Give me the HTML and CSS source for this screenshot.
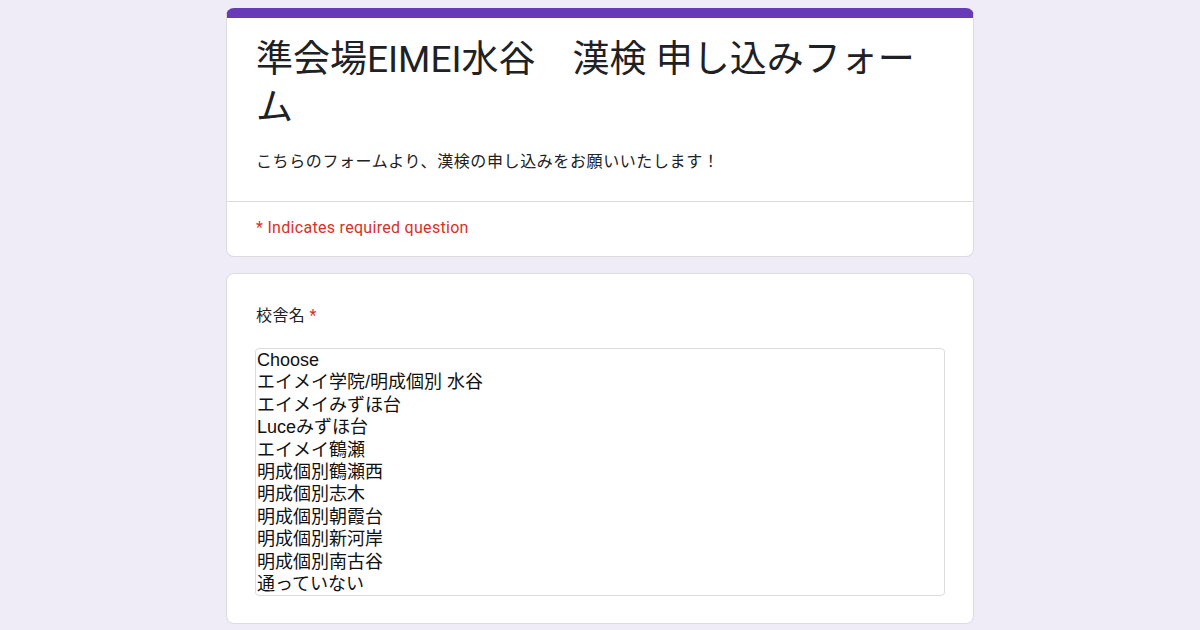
FILE: index.html
```
<!DOCTYPE html>
<html lang="ja">
<head>
    <meta charset="UTF-8">
    <meta name="viewport" content="width=device-width, initial-scale=1.0">
    <title>準会場EIMEI水谷　漢検 申し込みフォーム</title>
    <link rel="stylesheet" href="styles.css">
</head>
<body>
    <div class="form">
        <div class="card header-card">
            <div class="header-main">
                <h1 class="form-title">準会場EIMEI水谷　漢検 申し込みフォーム</h1>
                <p class="form-desc">こちらのフォームより、漢検の申し込みをお願いいたします！</p>
            </div>
            <div class="header-note">* Indicates required question</div>
        </div>

        <div class="card question">
            <div class="q-label">校舎名 <span class="req">*</span></div>
            <div class="listbox">
                <div class="opt">Choose</div>
                <div class="opt">エイメイ学院/明成個別 水谷</div>
                <div class="opt">エイメイみずほ台</div>
                <div class="opt">Luceみずほ台</div>
                <div class="opt">エイメイ鶴瀬</div>
                <div class="opt">明成個別鶴瀬西</div>
                <div class="opt">明成個別志木</div>
                <div class="opt">明成個別朝霞台</div>
                <div class="opt">明成個別新河岸</div>
                <div class="opt">明成個別南古谷</div>
                <div class="opt">通っていない</div>
            </div>
        </div>
    </div>
</body>
</html>
```
FILE: styles.css
```
body {
    margin: 0;
    background: #efebf7;
    font-family: Roboto, "Noto Sans CJK JP", sans-serif;
    color: #202124;
}
.form {
    width: 748px;
    margin: 0 auto;
    padding-top: 8px;
    display: flex;
    flex-direction: column;
    gap: 16px;
}
.card {
    background: #fff;
    border: 1px solid #dadce0;
    border-radius: 8px;
    box-sizing: border-box;
}
.header-card {
    border-top: 10px solid #673ab7;
}
.header-main {
    padding: 18px 28px 29px;
    border-bottom: 1px solid #dadce0;
}
.form-title {
    margin: 0;
    font-size: 37px;
    font-weight: 400;
    line-height: 48px;
    padding-left: 1px;
}
.form-desc {
    margin: 20px 0 0;
    font-size: 16px;
    line-height: 20px;
    letter-spacing: 0.6px;
    padding-left: 1px;
}
.header-note {
    padding: 16px 29px 18px;
    font-size: 16px;
    line-height: 20px;
    letter-spacing: 0.3px;
    color: #d93025;
}
.question {
    padding: 30px 28px 27px;
}
.q-label {
    font-size: 16px;
    line-height: 24px;
    letter-spacing: 0.4px;
    padding-left: 1px;
    margin-bottom: 20px;
}
.req {
    color: #d93025;
}
.listbox {
    border: 1px solid #dadce0;
    border-radius: 4px;
    font-family: "Liberation Sans", "Noto Sans CJK JP", sans-serif;
    font-size: 18px;
    color: #111;
}
.opt {
    height: 22.4px;
    line-height: 22.4px;
    padding-left: 1px;
    white-space: nowrap;
}
```
